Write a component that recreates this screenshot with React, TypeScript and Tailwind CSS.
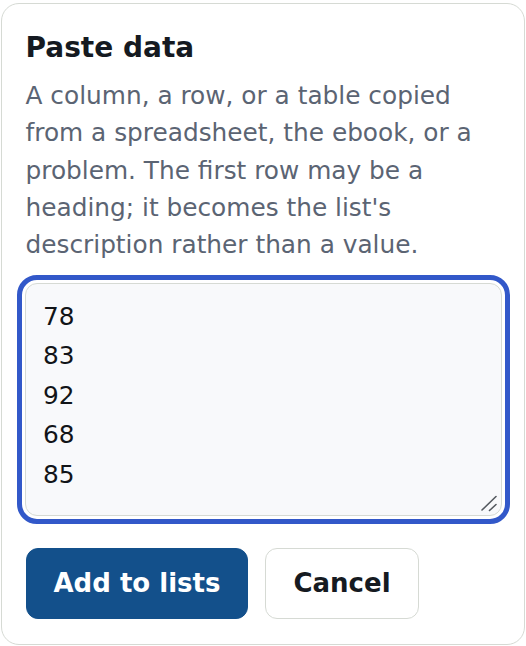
import React from "react";

export default function App() {
  return (
    <div className="w-[526px] h-[646px] bg-white pl-[1px] pr-[1px] pt-[2.5px]" style={{ fontFamily: '"DejaVu Sans", Verdana, sans-serif' }}>
      <div className="h-[642px] rounded-[18px] border-[1.5px] border-[#d6dad4] bg-white px-[23.5px] pt-[24px] pb-[24px] flex flex-col">
        <h2 className="text-[28px] leading-[39px] font-bold text-[#151a21]">Paste data</h2>
        <p className="mt-[10.6px] text-[24.8px] leading-[37.2px] text-[#5b6473]">
          A column, a row, or a table copied from a spreadsheet, the ebook, or a problem. The first row may be a heading; it becomes the list's description rather than a value.
        </p>
        <div className="relative mt-[19.5px] -mx-[1px]">
          <textarea
            className="block h-[233px] w-full resize-none rounded-[12px] border-[1.5px] border-[#d6dad4] bg-[#f8f9fb] pl-[17.5px] pr-[16px] pt-[13.3px] text-[24.8px] leading-[39.5px] text-[#111418] outline-[5px] outline-solid outline-[#3258c9] outline-offset-[3.5px]"
            style={{ fontFamily: '"DejaVu Sans", sans-serif' }}
            defaultValue={"78\n83\n92\n68\n85"}
          />
          <svg className="pointer-events-none absolute right-[4px] bottom-[4px]" width="18" height="18" viewBox="0 0 18 18">
            <line x1="2" y1="16" x2="16" y2="2.5" stroke="#555a60" strokeWidth="1.6" strokeLinecap="round" />
            <line x1="9.5" y1="16.5" x2="16" y2="10.5" stroke="#555a60" strokeWidth="1.6" strokeLinecap="round" />
          </svg>
        </div>
        <div className="mt-[32.5px] flex gap-[16.5px]">
          <button className="h-[71px] rounded-[12px] border-[1.5px] border-[#13508b] bg-[#13508b] px-[27px] text-[26px] font-bold text-white">
            Add to lists
          </button>
          <button className="h-[71px] rounded-[12px] border-[1.5px] border-[#d6dad4] bg-white px-[27.5px] text-[26px] font-bold text-[#151a21]">
            Cancel
          </button>
        </div>
      </div>
    </div>
  );
}
